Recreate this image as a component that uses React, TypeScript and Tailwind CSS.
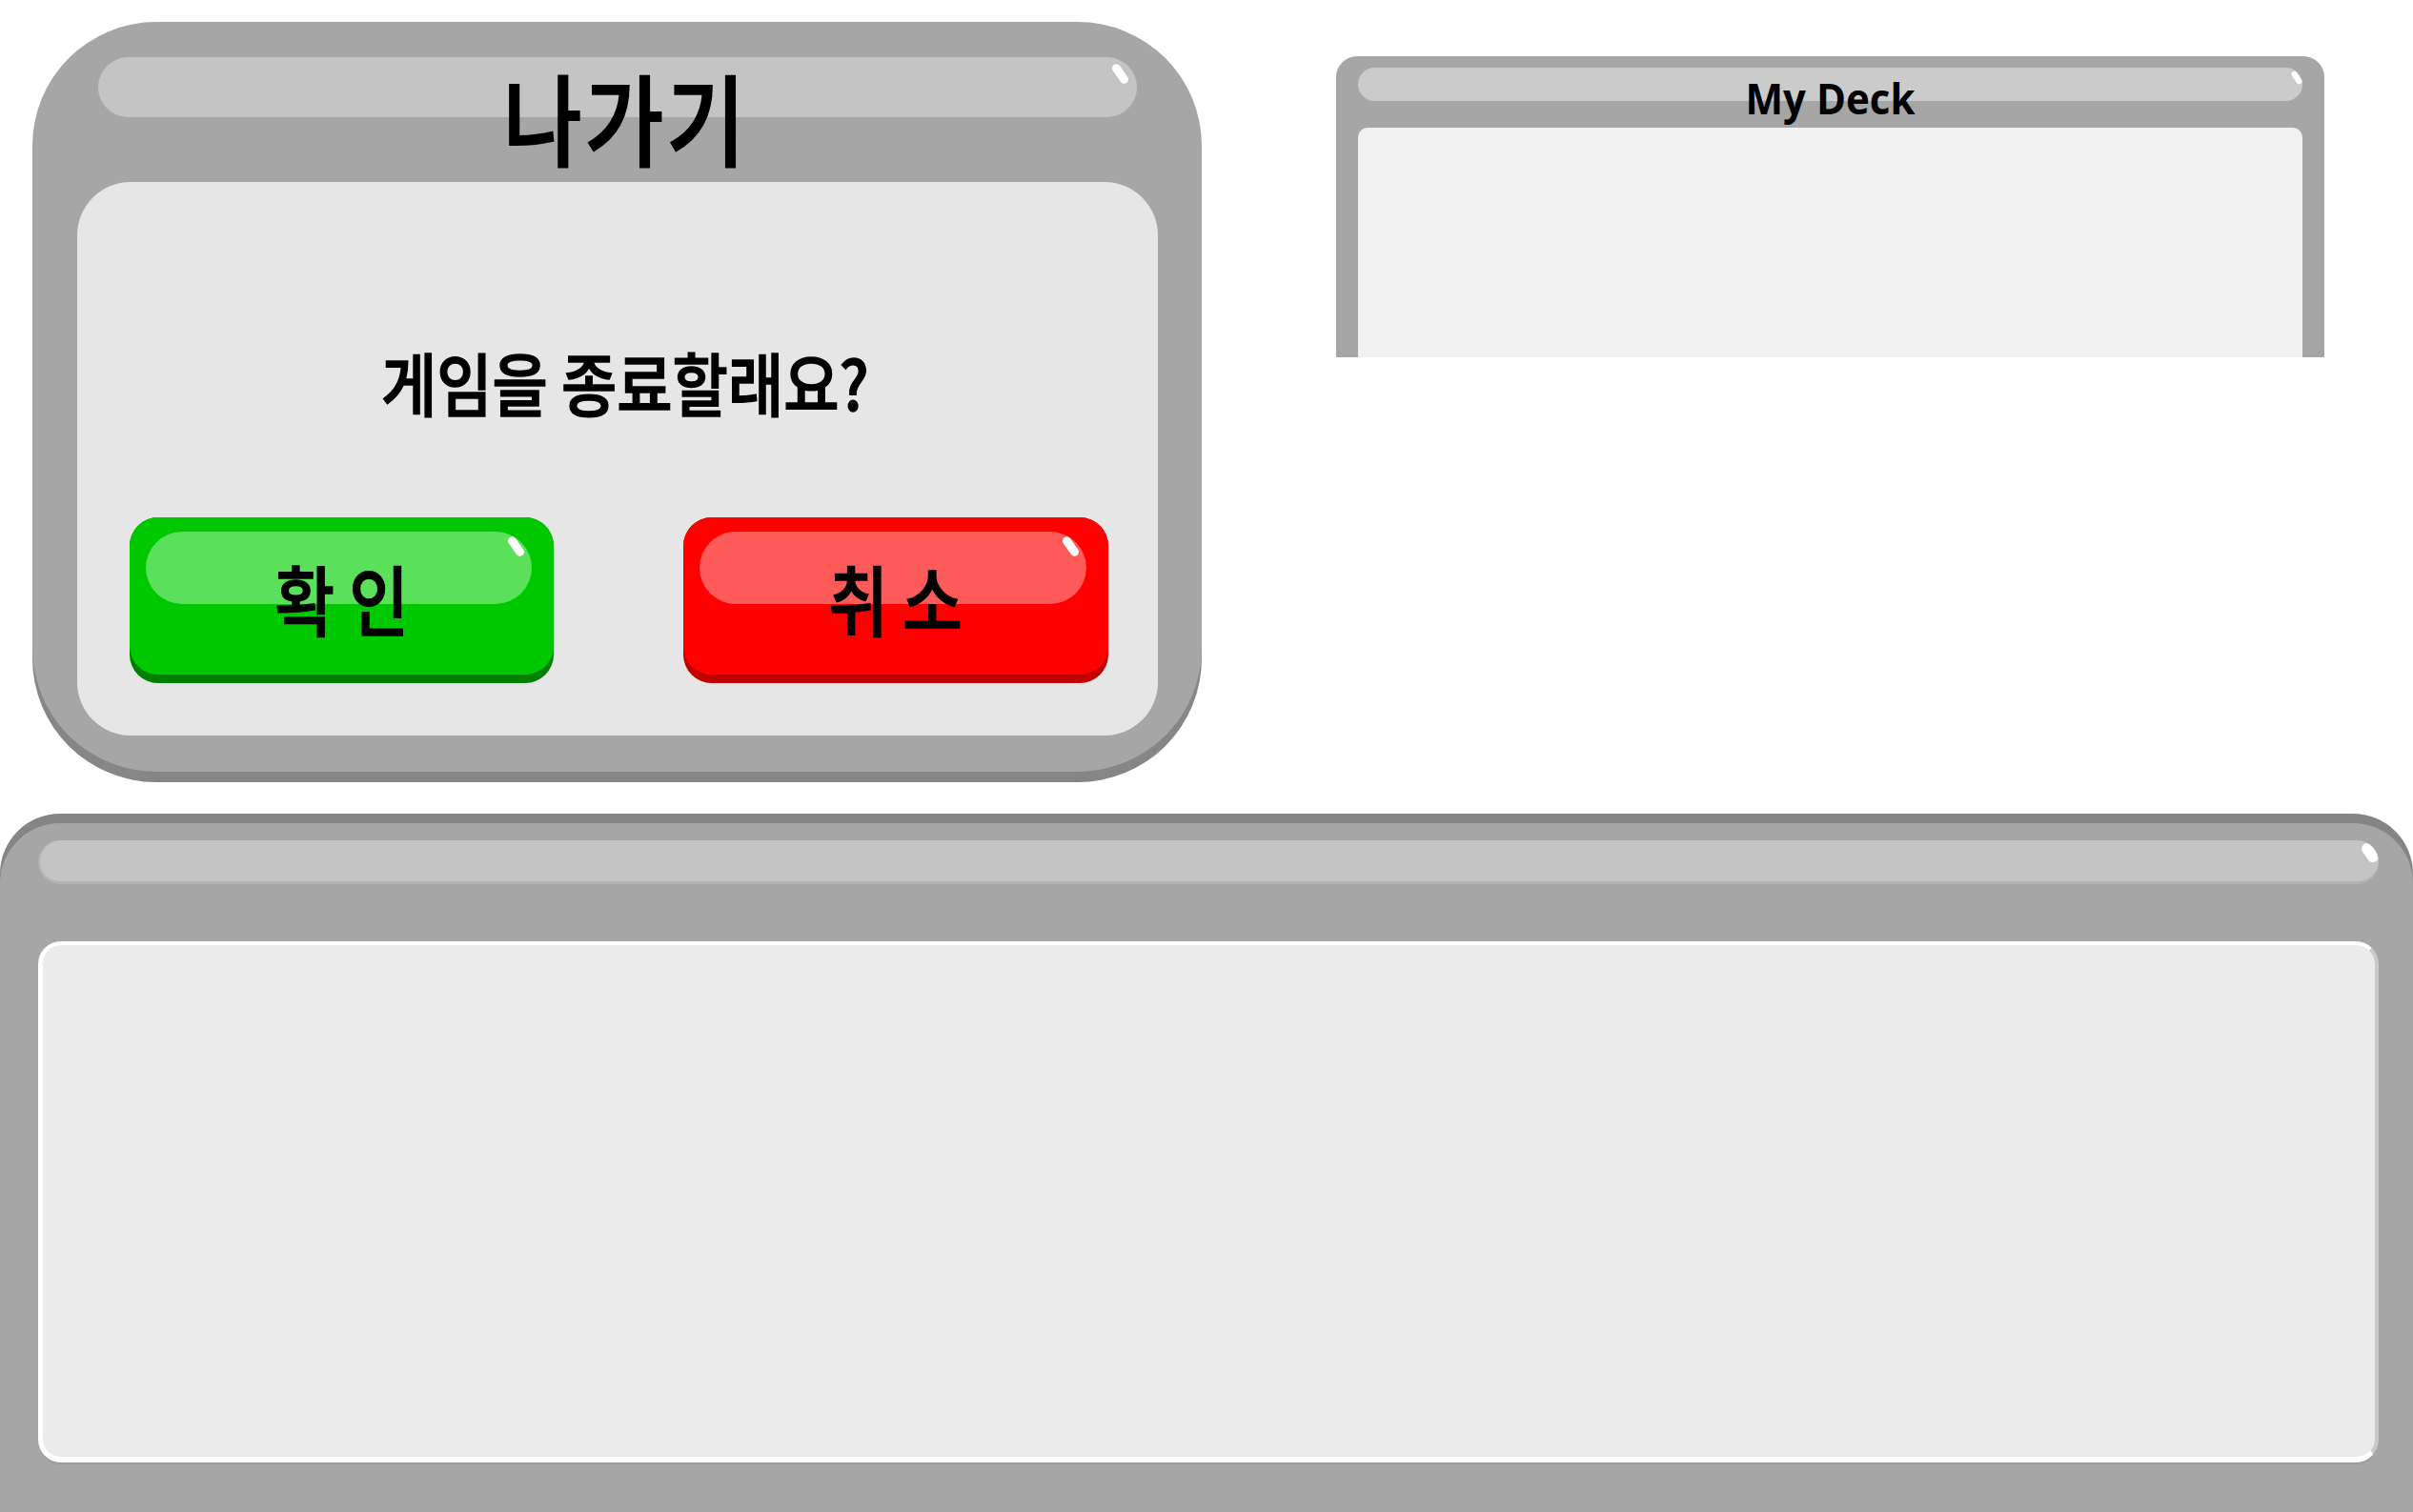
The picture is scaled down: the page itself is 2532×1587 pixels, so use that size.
import React from "react";

function Spot({ cls }: { cls: string }) {
  return <div className={`absolute rounded-full bg-white rotate-[-35deg] ${cls}`} />;
}

function GameButton({
  label,
  dark,
  main,
  light,
  width,
}: {
  label: string;
  dark: string;
  main: string;
  light: string;
  width: string;
}) {
  return (
    <div className={`relative h-[174px] rounded-[30px] ${dark} ${width}`}>
      <div className={`relative h-[165px] rounded-[30px] ${main} flex items-center justify-center`}>
        <div className={`absolute left-[17px] right-[23px] top-[15px] h-[76px] rounded-full ${light}`}>
          <Spot cls="right-[12px] top-[4px] w-[9px] h-[23px]" />
        </div>
        <span className="relative text-[80px] leading-none font-medium text-black scale-x-[0.85] whitespace-pre [-webkit-text-stroke:1.5px_black]">
          {label}
        </span>
      </div>
    </div>
  );
}

export default function App() {
  return (
    <div className="relative w-[2532px] h-[1587px] overflow-hidden bg-white font-['Noto_Sans_CJK_KR','Noto_Sans',sans-serif]">
      <div className="flex items-start">
        {/* Exit dialog */}
        <div className="ml-[34px] mt-[23px] w-[1227px] h-[787px] rounded-[130px] bg-[#a6a6a6] shadow-[0_11px_0_#868686] flex flex-col pl-[47px] pr-[46px] pt-[37px]">
          <div className="relative h-[131px]">
            <div className="relative mx-[22px] h-[63px] rounded-full bg-[#c4c4c4] overflow-hidden">
              <Spot cls="right-[13px] top-[6px] w-[9px] h-[23px]" />
            </div>
            <div className="absolute inset-x-0 top-[10px] flex justify-center pl-[18px]">
              <span className="text-[104px] leading-none font-medium text-black scale-x-[0.86] tracking-[4px] [-webkit-text-stroke:2px_black]">
                나가기
              </span>
            </div>
          </div>
          <div className="h-[581px] rounded-[56px] bg-[#e6e6e6] flex flex-col items-center">
            <div className="mt-[174px] h-[70px] pl-[16px] flex items-center justify-center">
              <span className="text-[72px] leading-none font-medium text-black scale-x-[0.88] whitespace-pre [-webkit-text-stroke:1.5px_black]">
                게임을 종료할래요?
              </span>
            </div>
            <div className="mt-[108px] w-full flex justify-between pl-[55px] pr-[52px]">
              <GameButton label="확 인" dark="bg-[#008000]" main="bg-[#00c800]" light="bg-[#5ae05a]" width="w-[445px]" />
              <GameButton label="취 소" dark="bg-[#c00000]" main="bg-[#ff0000]" light="bg-[#ff5a5a]" width="w-[446px]" />
            </div>
          </div>
        </div>

        {/* My Deck */}
        <div className="ml-[141px] mt-[59px] w-[1037px] h-[316px] rounded-t-[22px] bg-[#a6a6a6] flex flex-col px-[23px] pt-[12px]">
          <div className="relative h-[63px]">
            <div className="relative h-[35px] rounded-full bg-[#cbcbcb] overflow-hidden">
              <Spot cls="right-[3px] top-[3px] w-[6px] h-[15px]" />
            </div>
            <div className="absolute inset-x-0 top-[11px] flex justify-center">
              <span className="font-['Open_Sans',sans-serif] font-bold text-[42px] leading-none text-black scale-y-[1.08]">
                My Deck
              </span>
            </div>
          </div>
          <div className="flex-1 rounded-t-[10px] bg-[#f1f1f1]" />
        </div>
      </div>

      {/* Bottom panel */}
      <div className="mt-[54px] w-full h-[723px] rounded-t-[63px] bg-[#a6a6a6] shadow-[0_-10px_0_#858585] flex flex-col pl-[40px] pr-[36px] pt-[18px]">
        <div className="relative h-[46px] rounded-full bg-[#c4c4c4] border-b-[3px] border-l-[2px] border-[#b3b3b3] overflow-hidden">
          <Spot cls="right-[3px] top-[2px] w-[12px] h-[22px]" />
        </div>
        <div className="mt-[60px] h-[547px] rounded-[24px] bg-[#ebebeb] border-t-[4px] border-l-[5px] border-b-[6px] border-r-[4px] border-white border-r-[#c9c9c9] shadow-[0_2px_0_#9c9c9c]" />
      </div>
    </div>
  );
}
